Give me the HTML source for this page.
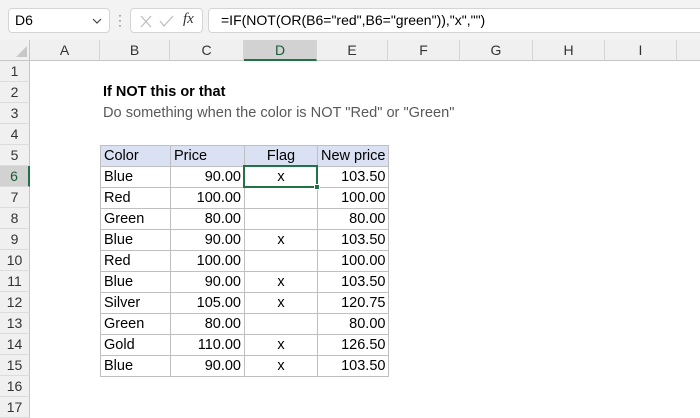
<!DOCTYPE html>
<html><head><style>
*{margin:0;padding:0;box-sizing:border-box}
body{width:700px;height:400px;overflow:hidden;background:#fff;font-family:"Liberation Sans",sans-serif;font-size:14px;color:#000;position:relative}
.a{position:absolute}
.top{left:0;top:0;width:700px;height:40px;background:#f3f3f3}
.box{background:#fff;border:1px solid #d4d4d4;border-radius:4px}
.ch{top:40px;height:21px;background:#f0f0f0;border-right:1px solid #d4d4d4;border-bottom:1px solid #c6c6c6;text-align:center;line-height:20px;color:#333;font-size:14px}
.rh{left:0;width:30px;height:21px;background:#f0f0f0;border-bottom:1px solid #dcdcdc;border-right:1px solid #c6c6c6;text-align:center;line-height:21px;color:#333;font-size:14px}
table{position:absolute;left:100px;top:145px;border-collapse:collapse}
td{border:1px solid #bfbfbf;height:21px;padding:1px 3px 0;font-size:14.5px;line-height:19px;white-space:nowrap}
td.r{text-align:right}td.c{text-align:center}
tr.h td{background:#d9e1f2}
</style></head><body>
<div class="a top"></div>
<div class="a box" style="left:8px;top:8px;width:102px;height:25px;padding:0 6px;line-height:23px">D6<svg class="a" style="right:7px;top:9px" width="10" height="6"><path d="M1 1l4 4 4-4" stroke="#444" stroke-width="1.2" fill="none"/></svg></div>
<div class="a" style="left:118px;top:13px;width:3px;color:#555;font-size:12px;line-height:5px">·<br>·<br>·</div>
<div class="a box" style="left:130px;top:8px;width:73px;height:25px">
<svg width="73" height="25" style="position:absolute;left:0;top:0"><path d="M10 7l10 11M20 7L10 18" stroke="#bbb" stroke-width="1.2" fill="none"/><path d="M29 12l4 5 9-10" stroke="#bbb" stroke-width="1.2" fill="none"/></svg>
<span class="a" style="left:52px;top:2px;font-family:'Liberation Serif',serif;font-style:italic;font-size:15px;color:#333">fx</span></div>
<div class="a box" style="left:208px;top:8px;width:500px;height:25px;padding-left:12px;line-height:23px">=IF(NOT(OR(B6="red",B6="green")),"x","")</div>
<div class="a" style="left:0;top:40px;width:30px;height:21px;background:#f0f0f0;border-right:1px solid #c6c6c6;border-bottom:1px solid #c6c6c6"></div>
<svg class="a" style="left:16px;top:46px" width="12" height="12"><path d="M11 0V11H0Z" fill="#c8c8c8"/></svg>
<div class="a ch" style="left:30px;width:70px">A</div>
<div class="a ch" style="left:100px;width:70px">B</div>
<div class="a ch" style="left:170px;width:74px">C</div>
<div class="a ch" style="left:244px;width:73px;background:#d2d2d2;border-bottom:2px solid #217346;color:#185c37">D</div>
<div class="a ch" style="left:317px;width:71px">E</div>
<div class="a ch" style="left:388px;width:72px">F</div>
<div class="a ch" style="left:460px;width:73px">G</div>
<div class="a ch" style="left:533px;width:72px">H</div>
<div class="a ch" style="left:605px;width:72px">I</div>
<div class="a ch" style="left:677px;width:30px"></div>
<div class="a rh" style="top:61px">1</div>
<div class="a rh" style="top:82px">2</div>
<div class="a rh" style="top:103px">3</div>
<div class="a rh" style="top:124px">4</div>
<div class="a rh" style="top:145px">5</div>
<div class="a rh" style="top:166px;background:#d2d2d2;border-right:2px solid #217346;color:#185c37">6</div>
<div class="a rh" style="top:187px">7</div>
<div class="a rh" style="top:208px">8</div>
<div class="a rh" style="top:229px">9</div>
<div class="a rh" style="top:250px">10</div>
<div class="a rh" style="top:271px">11</div>
<div class="a rh" style="top:292px">12</div>
<div class="a rh" style="top:313px">13</div>
<div class="a rh" style="top:334px">14</div>
<div class="a rh" style="top:355px">15</div>
<div class="a rh" style="top:376px">16</div>
<div class="a rh" style="top:397px">17</div>
<div class="a" style="left:103px;top:84px;font-weight:bold;font-size:14.5px">If NOT this or that</div>
<div class="a" style="left:103px;top:105px;color:#595959;font-size:14.6px">Do something when the color is NOT "Red" or "Green"</div>
<table>
<colgroup><col style="width:70px"><col style="width:74px"><col style="width:73px"><col style="width:71px"></colgroup>
<tr class="h"><td>Color</td><td>Price</td><td class="c">Flag</td><td>New price</td></tr>
<tr><td>Blue</td><td class="r">90.00</td><td class="c">x</td><td class="r">103.50</td></tr>
<tr><td>Red</td><td class="r">100.00</td><td></td><td class="r">100.00</td></tr>
<tr><td>Green</td><td class="r">80.00</td><td></td><td class="r">80.00</td></tr>
<tr><td>Blue</td><td class="r">90.00</td><td class="c">x</td><td class="r">103.50</td></tr>
<tr><td>Red</td><td class="r">100.00</td><td></td><td class="r">100.00</td></tr>
<tr><td>Blue</td><td class="r">90.00</td><td class="c">x</td><td class="r">103.50</td></tr>
<tr><td>Silver</td><td class="r">105.00</td><td class="c">x</td><td class="r">120.75</td></tr>
<tr><td>Green</td><td class="r">80.00</td><td></td><td class="r">80.00</td></tr>
<tr><td>Gold</td><td class="r">110.00</td><td class="c">x</td><td class="r">126.50</td></tr>
<tr><td>Blue</td><td class="r">90.00</td><td class="c">x</td><td class="r">103.50</td></tr>
</table>
<div class="a" style="left:243px;top:165px;width:75px;height:23px;border:2px solid #217346"></div>
<div class="a" style="left:314px;top:184px;width:6px;height:6px;background:#217346;border:1px solid #fff"></div>
</body></html>
